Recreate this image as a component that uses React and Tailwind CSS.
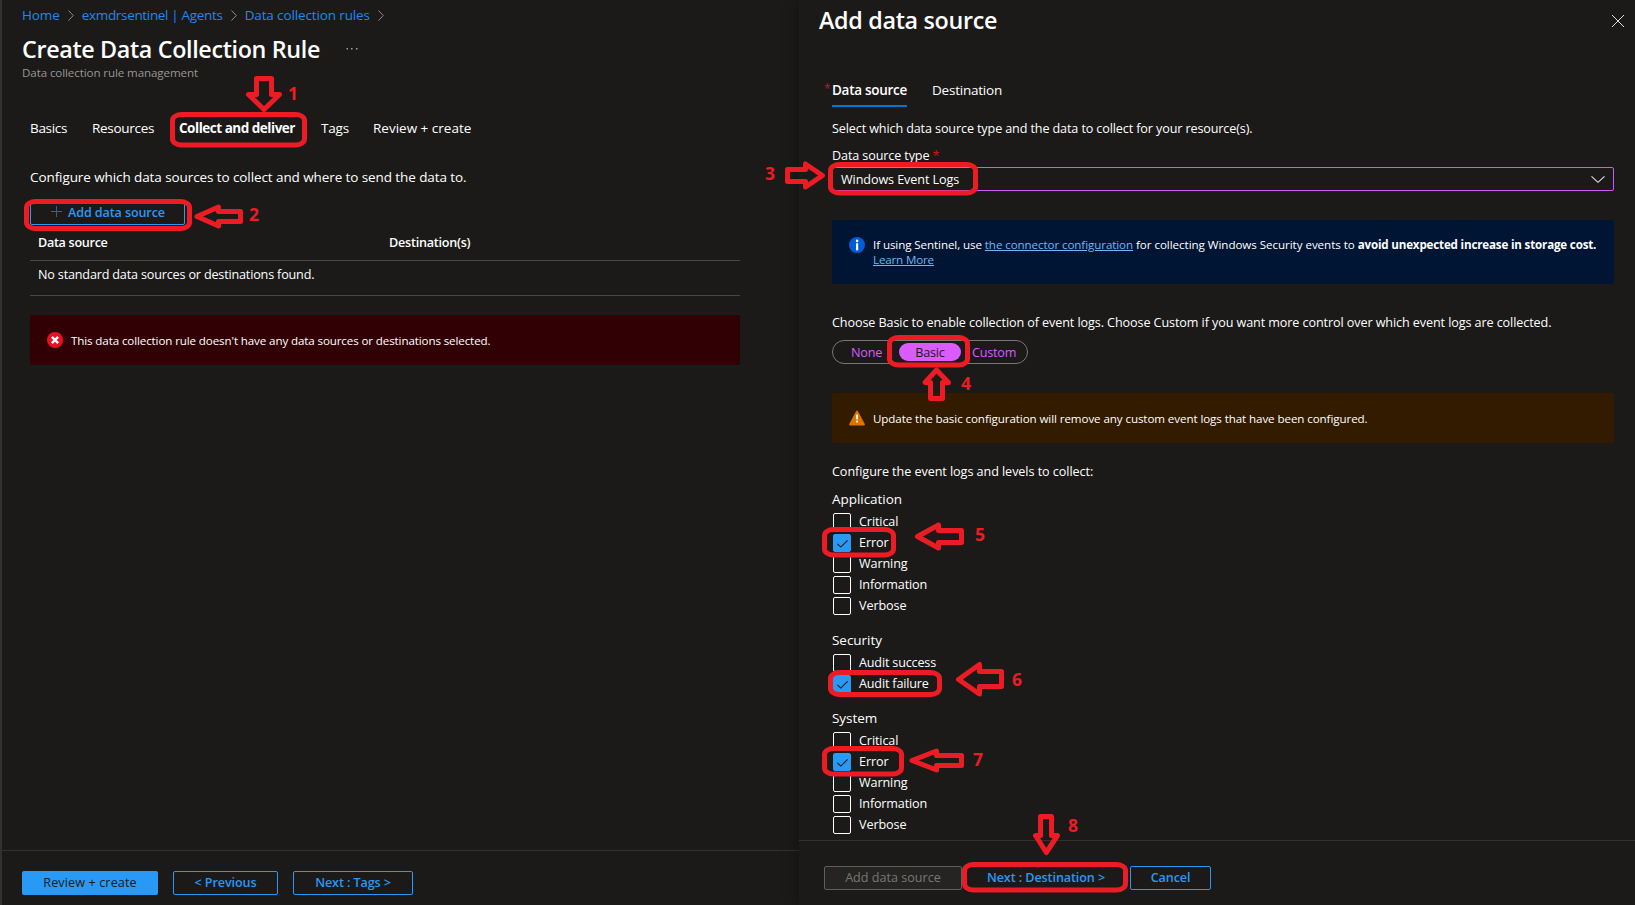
const RED = "#ed1c24";

const OutlineButton = ({ className = "", children }) => (
  <button
    className={`flex h-6 shrink-0 items-center justify-center rounded-[2px] border border-[#2899f5] text-[12.6px] font-semibold text-[#2899f5] ${className}`}
  >
    {children}
  </button>
);

const Crumb = ({ className = "", children }) => (
  <>
    <a className={`text-[#2087f5] ${className}`}>{children}</a>
    <svg className="mx-[8px] mt-px h-[11px] w-[6px]" viewBox="0 0 6 11" fill="none" stroke="#8f8d8b" strokeWidth="1">
      <path d="M0.5 0.5 5.3 5.5 0.5 10.5" />
    </svg>
  </>
);

const Checkbox = ({ label, checked }) => (
  <label className="flex h-[21px] items-start pl-px">
    <span
      className={`flex h-[18px] w-[18px] items-center justify-center rounded-[2px] border ${
        checked ? "border-[#2899f5] bg-[#2899f5]" : "border-white"
      }`}
    >
      {checked && (
        <svg className="mt-px h-2 w-[11px]" viewBox="0 0 11 8" fill="none" stroke="#1b1a19" strokeWidth="1.1">
          <path d="M0.4 3.8 3.8 7.1 10.6 0.4" />
        </svg>
      )}
    </span>
    <span className={`ml-2 leading-[18px] ${label.length > 10 ? "tracking-[-0.17px]" : "tracking-[-0.1px]"}`}>
      {label}
    </span>
  </label>
);

const Group = ({ title, items, className = "" }) => (
  <div className={className}>
    <div className="h-6 text-[13.5px] leading-5 tracking-[-0.04px]">{title}</div>
    {items.map(([label, checked]) => (
      <Checkbox key={label} label={label} checked={checked} />
    ))}
  </div>
);

const InfoIcon = () => (
  <svg className="h-4 w-4 shrink-0" viewBox="0 0 16 16">
    <circle cx="8" cy="8" r="8" fill="#015cda" />
    <rect x="7" y="6.3" width="2.2" height="7" fill="#fff" />
    <circle cx="8.1" cy="3.9" r="1.3" fill="#fff" />
  </svg>
);

const WarnIcon = () => (
  <svg className="h-4 w-4 shrink-0" viewBox="0 0 16 16">
    <path d="M7.2 1 Q8 -0.2 8.8 1 L15.8 14 Q16.2 15.4 15 15.4 H1 Q-0.2 15.4 0.2 14 Z" fill="#db7500" />
    <path d="M7 4.5h2.1l-.3 5H7.3z" fill="#fff" />
    <circle cx="8.05" cy="11.6" r="1.1" fill="#fff" />
  </svg>
);

const ErrorIcon = () => (
  <svg className="h-4 w-4 shrink-0" viewBox="0 0 16 16">
    <circle cx="8" cy="8" r="8" fill="#e81123" />
    <path d="M4.9 4.9 11.1 11.1M11.1 4.9 4.9 11.1" stroke="#fff" strokeWidth="2.3" />
  </svg>
);

// Numbered walkthrough marks laid over the portal page: [box, arrow outline, digit position].
const marks = [
  { box: [172.5, 114.5, 132, 30.5], arrow: "M256.5 78.5H271.5V94.5H279.5L264 109.5 248.5 94.5H256.5Z", at: [288, 100] },
  { box: [26.5, 201.5, 163, 27], arrow: "M240.5 211.5V221.5H218.5V226L197 216.5 218.5 207V211.5Z", at: [249, 220.5] },
  { box: [830.5, 164.5, 145, 28.5], arrow: "M787.5 169.5V181.5H805.5V187L822.5 175.5 805.5 164V169.5Z", at: [765, 180] },
  { box: [889.5, 337.5, 78, 27.5], arrow: "M930.5 398.5H942.5V382.5H948.5L936.5 370 925 382.5H930.5Z", at: [961, 390] },
  { box: [824.5, 529.5, 69, 25.5], arrow: "M961.5 530.5V542.5H938.5V548L917.5 536.5 938.5 525V530.5Z", at: [975, 541] },
  { box: [830.5, 672.5, 109, 22], arrow: "M1001.5 671.5V686.5H979.5V694L958.5 679.5 979.5 664.5V671.5Z", at: [1012, 685.5] },
  { box: [824.5, 748.5, 77, 25.5], arrow: "M961.5 755.5V765.5H936.5V770L912 760.5 936.5 751V755.5Z", at: [973, 765.5] },
  { box: [964.5, 864.5, 161, 25.5], arrow: "M1040.5 816.5H1051.5V835.5H1057.5L1046.3 852.5 1035.5 835.5H1040.5Z", at: [1068, 832] },
];

const Marks = () => (
  <svg
    className="pointer-events-none absolute left-0 top-0 h-[905px] w-[1635px]"
    viewBox="0 0 1635 905"
    fill="none"
    stroke={RED}
    strokeWidth="5"
    strokeLinejoin="round"
  >
    {marks.map(({ box, arrow, at }, i) => (
      <g key={i}>
        <rect x={box[0]} y={box[1]} width={box[2]} height={box[3]} rx="9" ry="6" />
        <path d={arrow} />
        <text x={at[0]} y={at[1]} fill={RED} stroke="none" className="text-[17.5px] font-bold">
          {i + 1}
        </text>
      </g>
    ))}
  </svg>
);

const LeftPane = () => (
  <div className="flex h-full w-[799px] shrink-0 flex-col border-l-2 border-[#323130]">
    <div className="flex h-[25px] items-center pl-5 pt-[5px] text-[13.5px] leading-5">
      <Crumb className="tracking-[-0.1px]">Home</Crumb>
      <Crumb className="tracking-[-0.33px]">exmdrsentinel | Agents</Crumb>
      <Crumb className="tracking-[-0.13px]">Data collection rules</Crumb>
    </div>
    <div className="mt-[10px] flex h-7 items-center pl-5">
      <h1 className="w-[324px] whitespace-nowrap text-[23.3px] font-semibold leading-7 tracking-[-0.34px]">
        Create Data Collection Rule
      </h1>
      <svg className="h-[2px] w-3" viewBox="0 0 12 2" fill="#a19f9d">
        <path d="M0.5 0H2V1.5H0.5zM5 0H6.5V1.5H5zM10 0H11.5V1.5H10z" />
      </svg>
    </div>
    <div className="mt-px pl-5 text-[11.6px] leading-[17px] tracking-[-0.11px] text-[#979593]">
      Data collection rule management
    </div>

    <div className="ml-7 mt-[37px] flex h-5 whitespace-nowrap text-[13.5px] leading-5">
      <span className="w-[62px] tracking-[-0.3px]">Basics</span>
      <span className="w-[87px] tracking-[-0.28px]">Resources</span>
      <span className="w-[142px] font-bold tracking-[-0.48px]">Collect and deliver</span>
      <span className="w-[52px] tracking-[-0.17px]">Tags</span>
      <span>Review + create</span>
    </div>
    <p className="ml-7 mt-[29px] text-[13.5px] leading-5 tracking-[-0.09px]">
      Configure which data sources to collect and where to send the data to.
    </p>
    <button className="ml-7 mt-[14px] flex h-6 w-[155px] items-center rounded-[2px] border border-[#2899f5] pl-5 text-[12.6px] font-semibold tracking-[-0.12px] text-[#2899f5]">
      <svg className="mb-[3px] mr-[6px] h-[11px] w-[11px]" viewBox="0 0 11 11" stroke="#23679f" strokeWidth="1">
        <path d="M5.5 0V11M0 5.5H11" />
      </svg>
      <span className="pt-px">Add data source</span>
    </button>

    <div className="ml-7 w-[710px] text-[12.6px]">
      <div className="flex h-9 border-b border-[#484644] pl-2 pt-2 font-semibold leading-5">
        <span className="w-[351px] tracking-[-0.3px]">Data source</span>
        <span className="tracking-[-0.24px]">Destination(s)</span>
      </div>
      <div className="h-[35px] border-b border-[#484644] pl-2 pt-1 leading-5 tracking-[-0.17px]">
        No standard data sources or destinations found.
      </div>
      <div className="mt-[19px] flex h-[50px] items-center gap-2 rounded-[2px] bg-[#310004] pl-[17px] text-[11.6px] tracking-[-0.12px]">
        <ErrorIcon />
        <span className="pt-[2px]">
          This data collection rule doesn't have any data sources or destinations selected.
        </span>
      </div>
    </div>

    <div className="mt-auto flex h-[55px] border-t border-[#323130] pl-5 pt-5">
      <button className="flex h-6 w-[136px] items-center justify-center rounded-[2px] bg-[#2899f5] text-[12.6px] tracking-[0.12px] text-[#1b1a19]">
        Review + create
      </button>
      <OutlineButton className="ml-[15px] w-[105px] tracking-[-0.1px]">&lt; Previous</OutlineButton>
      <OutlineButton className="ml-[15px] w-[120px] tracking-[-0.1px]">Next : Tags &gt;</OutlineButton>
    </div>
  </div>
);

const RightPane = () => (
  <div className="flex h-full flex-1 flex-col bg-[#1b1a19] shadow-[0_0_14px_rgba(0,0,0,0.4)]">
    <div className="flex h-[34px] items-center justify-between pl-5 pr-[11px] pt-[6px]">
      <h2 className="text-[23.3px] font-semibold leading-7 tracking-[-0.3px]">Add data source</h2>
      <svg className="mt-[2px] h-3 w-3" viewBox="0 0 12 12" stroke="#e1dfdd" strokeWidth="1">
        <path d="M0 0 12 12M12 0 0 12" />
      </svg>
    </div>

    <div className="ml-[33px] w-[782px] text-[12.6px] leading-5">
      <div className="mt-[46px] flex text-[13.5px]">
        <div className="-ml-[8px] flex">
          <span className="-mt-px w-[8px] text-[12px] text-[#a4262c]">*</span>
          <div className="h-[27px] w-[75px] whitespace-nowrap border-b-2 border-[#0078d4] font-semibold tracking-[-0.29px]">
            Data source
          </div>
        </div>
        <span className="ml-[25px] tracking-[-0.22px]">Destination</span>
      </div>
      <p className="mt-3 tracking-[-0.12px]">
        Select which data source type and the data to collect for your resource(s).
      </p>
      <div className="mt-[7px] tracking-[-0.12px]">
        Data source type <span className="text-[#e00b1c]">*</span>
      </div>
      <div className="mt-px flex h-6 items-center justify-between rounded-[2px] border border-[#d059f5] pl-2 pr-2">
        <span className="pt-[2px] tracking-[-0.08px]">Windows Event Logs</span>
        <svg className="h-[7px] w-[14px]" viewBox="0 0 14 7" fill="none" stroke="#e1dfdd" strokeWidth="1.1">
          <path d="M0.5 0.4 7 6.3 13.5 0.4" />
        </svg>
      </div>

      <div className="mt-[29px] flex h-16 gap-2 whitespace-nowrap rounded-[2px] bg-[#001433] pl-[17px] pt-[17px] text-[11.6px] leading-[15px]">
        <InfoIcon />
        <div>
          <span className="tracking-[-0.09px]">If using Sentinel, use </span>
          <a className="tracking-[-0.09px] text-[#6cb8f6] underline">the connector configuration</a>
          <span className="tracking-[-0.05px]"> for collecting Windows Security events to </span>
          <b className="tracking-[-0.17px]">avoid unexpected increase in storage cost.</b>
          <br />
          <a className="tracking-[-0.16px] text-[#6cb8f6] underline">Learn More</a>
        </div>
      </div>

      <p className="mt-[29px] whitespace-nowrap tracking-[-0.093px]">
        Choose Basic to enable collection of event logs. Choose Custom if you want more control over which event logs
        are collected.
      </p>
      <div className="mt-[7px] flex h-6 w-[196px] items-center rounded-full border border-[#797775] text-[#da5bff]">
        <span className="w-[66px] pl-[18px] pt-[2px] tracking-[-0.15px]">None</span>
        <span className="h-[18px] w-[62px] rounded-full bg-[#da5bff] text-center leading-[20px] tracking-[-0.2px] text-[#1b1a19]">
          Basic
        </span>
        <span className="pl-[11px] pt-[2px] tracking-[-0.2px]">Custom</span>
      </div>

      <div className="mt-[29px] flex h-[50px] items-center gap-2 rounded-[2px] bg-[#331b00] pl-[17px] text-[11.6px] tracking-[-0.09px]">
        <WarnIcon />
        <span className="pt-[2px]">
          Update the basic configuration will remove any custom event logs that have been configured.
        </span>
      </div>

      <p className="mt-[19px] tracking-[-0.06px]">Configure the event logs and levels to collect:</p>
      <Group
        title="Application"
        className="mt-[7px]"
        items={[["Critical"], ["Error", true], ["Warning"], ["Information"], ["Verbose"]]}
      />
      <Group title="Security" className="mt-3" items={[["Audit success"], ["Audit failure", true]]} />
      <Group
        title="System"
        className="mt-3"
        items={[["Critical"], ["Error", true], ["Warning"], ["Information"], ["Verbose"]]}
      />
    </div>

    <div className="mt-auto flex h-[65px] border-t border-[#323130] pl-[25px] pt-[25px]">
      <button className="flex h-6 w-[138px] items-center justify-center rounded-[2px] border border-[#605e5c] bg-[#252423] text-[12.6px] font-medium text-[#797775]">
        Add data source
      </button>
      <OutlineButton className="ml-[3px] w-[160px] pl-[2px] tracking-[-0.1px]">Next : Destination &gt;</OutlineButton>
      <OutlineButton className="ml-[5px] w-[81px] tracking-[-0.1px]">Cancel</OutlineButton>
    </div>
  </div>
);

export default function App() {
  return (
    <div className="relative flex h-[905px] w-[1635px] overflow-hidden bg-[#1b1a19] font-['Open_Sans','Noto_Sans',sans-serif] text-white">
      <LeftPane />
      <RightPane />
      <Marks />
    </div>
  );
}
